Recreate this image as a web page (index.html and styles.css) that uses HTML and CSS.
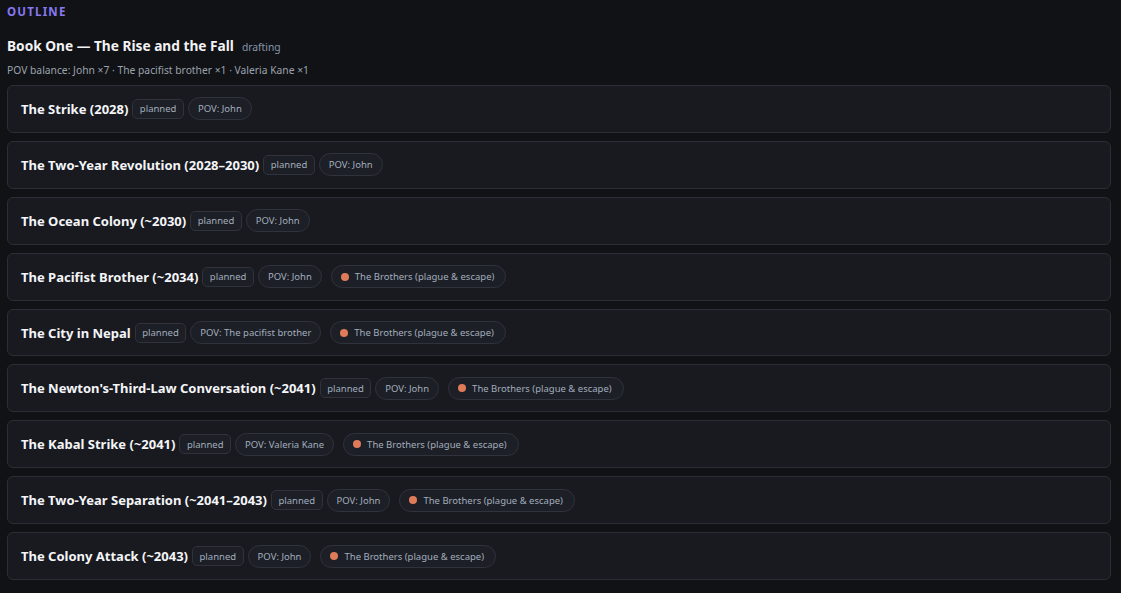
FILE: index.html
```html
<!DOCTYPE html>
<html lang="en">
<head>
<meta charset="utf-8">
<title>Outline</title>
<link rel="stylesheet" href="styles.css">
</head>
<body>
<main class="outline">
  <h2 class="section-label">OUTLINE</h2>
  <div class="book-head">
    <h3 class="book-title">Book One — The Rise and the Fall</h3>
    <span class="book-status">drafting</span>
  </div>
  <p class="pov-balance">POV balance: John ×7 · The pacifist brother ×1 · Valeria Kane ×1</p>
  <ul class="chapters">
    <li class="chapter">
      <span class="chapter-title">The Strike (2028)</span>
      <span class="tag">planned</span>
      <span class="pill">POV: John</span>
    </li>
    <li class="chapter">
      <span class="chapter-title">The Two-Year Revolution (2028–2030)</span>
      <span class="tag">planned</span>
      <span class="pill">POV: John</span>
    </li>
    <li class="chapter">
      <span class="chapter-title">The Ocean Colony (~2030)</span>
      <span class="tag">planned</span>
      <span class="pill">POV: John</span>
    </li>
    <li class="chapter">
      <span class="chapter-title">The Pacifist Brother (~2034)</span>
      <span class="tag">planned</span>
      <span class="pill">POV: John</span>
      <span class="pill arc"><i class="dot"></i>The Brothers (plague &amp; escape)</span>
    </li>
    <li class="chapter">
      <span class="chapter-title">The City in Nepal</span>
      <span class="tag">planned</span>
      <span class="pill">POV: The pacifist brother</span>
      <span class="pill arc"><i class="dot"></i>The Brothers (plague &amp; escape)</span>
    </li>
    <li class="chapter">
      <span class="chapter-title">The Newton's-Third-Law Conversation (~2041)</span>
      <span class="tag">planned</span>
      <span class="pill">POV: John</span>
      <span class="pill arc"><i class="dot"></i>The Brothers (plague &amp; escape)</span>
    </li>
    <li class="chapter">
      <span class="chapter-title">The Kabal Strike (~2041)</span>
      <span class="tag">planned</span>
      <span class="pill">POV: Valeria Kane</span>
      <span class="pill arc"><i class="dot"></i>The Brothers (plague &amp; escape)</span>
    </li>
    <li class="chapter">
      <span class="chapter-title">The Two-Year Separation (~2041–2043)</span>
      <span class="tag">planned</span>
      <span class="pill">POV: John</span>
      <span class="pill arc"><i class="dot"></i>The Brothers (plague &amp; escape)</span>
    </li>
    <li class="chapter">
      <span class="chapter-title">The Colony Attack (~2043)</span>
      <span class="tag">planned</span>
      <span class="pill">POV: John</span>
      <span class="pill arc"><i class="dot"></i>The Brothers (plague &amp; escape)</span>
    </li>
  </ul>
</main>
</body>
</html>
```
FILE: styles.css
```css
* { box-sizing: border-box; }

html, body {
  margin: 0;
  background: #111215;
  color: #e8e9ec;
  font-family: "Noto Sans", "Open Sans", "Liberation Sans", sans-serif;
}

.outline {
  padding: 4px 10px 0 7px;
}

.section-label {
  margin: 0;
  font-size: 11.5px;
  font-weight: 700;
  letter-spacing: 1.2px;
  color: #8679f2;
  line-height: 16px;
}

.book-head {
  display: flex;
  align-items: baseline;
  gap: 8px;
  margin-top: 17px;
}

.book-title {
  margin: 0;
  font-size: 13.7px;
  font-weight: 700;
  line-height: 18px;
  color: #f2f3f5;
}

.book-status {
  font-size: 10.3px;
  color: #8595ad;
}

.pov-balance {
  margin: 8px 0 0;
  font-size: 10.3px;
  line-height: 15px;
  color: #9ba2ae;
}

.chapters {
  list-style: none;
  margin: 7px 0 0;
  padding: 0;
  display: flex;
  flex-direction: column;
  gap: 8px;
}

.chapter {
  display: flex;
  align-items: center;
  gap: 4px;
  height: 47.9px;
  padding: 0 13px;
  background: #181a20;
  border: 1px solid #2b2e36;
  border-radius: 6px;
}

.chapter-title {
  font-size: 13px;
  font-weight: 700;
  color: #f4f5f7;
}

.tag,
.pill {
  display: inline-flex;
  align-items: center;
  font-size: 9.5px;
  color: #a3adbd;
  background: #1c1f26;
  border: 1px solid #30333c;
  white-space: nowrap;
}

.tag {
  height: 20px;
  padding: 0 6.5px;
  border-radius: 5px;
}

.pill {
  height: 23px;
  padding: 0 9px;
  border-radius: 12px;
}

.pill.arc {
  margin-left: 5px;
  padding-right: 11px;
}

.dot {
  display: inline-block;
  width: 8px;
  height: 8px;
  border-radius: 50%;
  background: #e07b5a;
  margin-right: 6px;
}
```
